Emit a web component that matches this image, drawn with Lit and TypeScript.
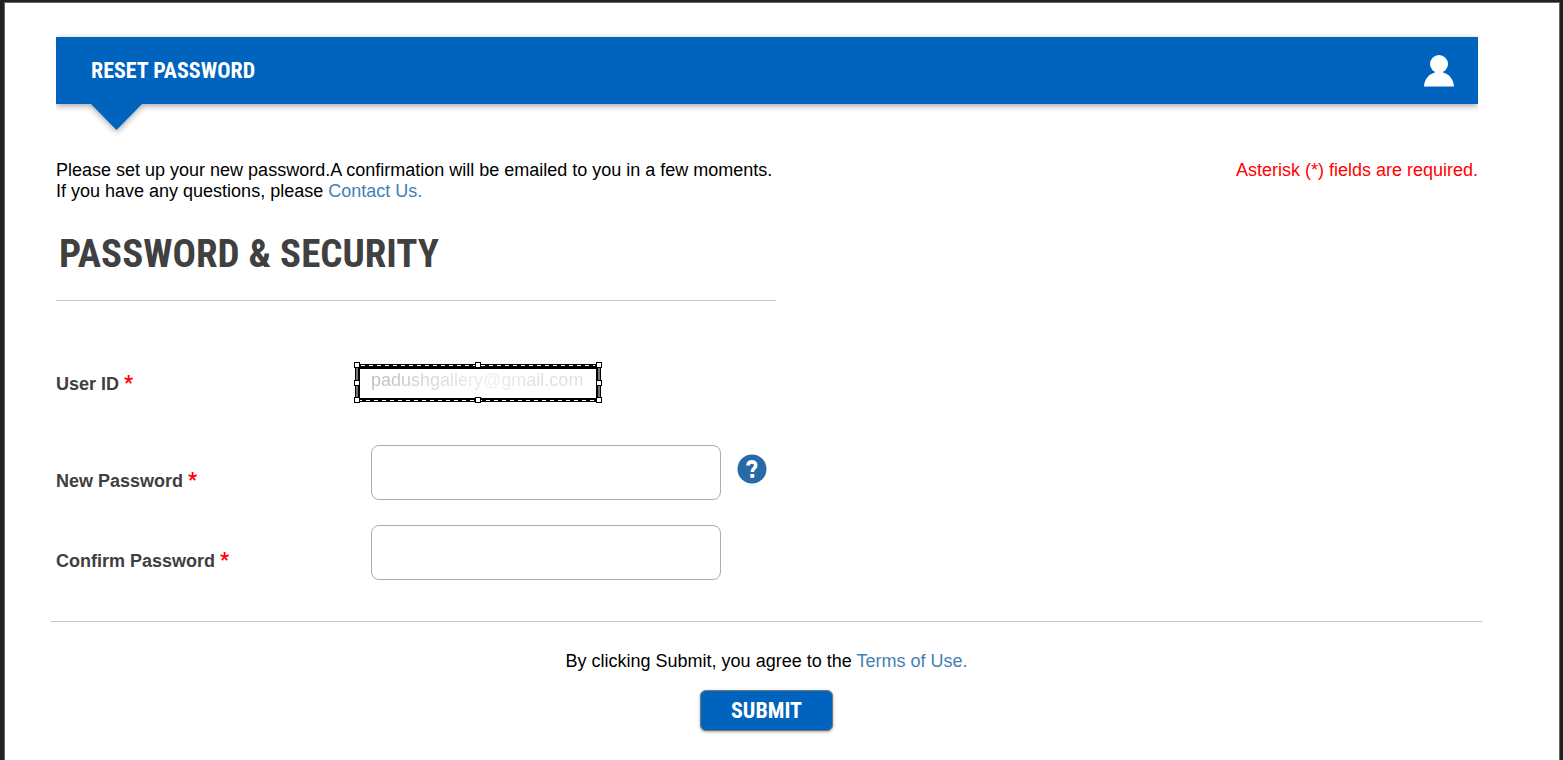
import { LitElement, html, svg, css } from "lit";
import { customElement } from "lit/decorators.js";

@customElement("selection-frame")
class SelectionFrame extends LitElement {
  static styles = css`
    :host {
      display: block;
    }
    svg {
      display: block;
    }
  `;

  render() {
    const handles = [
      [0, 0], [121, 0], [242, 0],
      [0, 18], [242, 18],
      [0, 35], [121, 35], [242, 35],
    ];
    return html`
      <svg width="248" height="41" viewBox="0 0 248 41" shape-rendering="crispEdges" aria-hidden="true">
        <path d="M1 2h246v38H1zM6 7v29h236V7z" fill="#000" fill-rule="evenodd" />
        <path d="M2 6h2v30H2zM244 6h2v30h-2z" fill="#777" />
        <path d="M7 3.500h234M4 38.500h238" stroke="#fff" stroke-width="1" stroke-dasharray="4 4" />
        ${handles.map(
          ([x, y]) => svg`
            <rect x=${x} y=${y} width="6" height="6" fill="#000" />
            <rect x=${x + 1} y=${y + 1} width="4" height="4" fill="#fff" />`
        )}
      </svg>
    `;
  }
}

@customElement("app-root")
class AppRoot extends LitElement {
  static styles = css`
    :host {
      display: block;
      font-family: "Liberation Sans", Arial, sans-serif;
      font-size: 18px;
      line-height: 21px;
      color: #000;
    }
    * {
      box-sizing: border-box;
    }
    .page {
      min-height: 100vh;
      padding: 1px 1px 0;
      background: #666;
      border: solid #222;
      border-width: 2px 3px 0 4px;
    }
    .sheet {
      min-height: calc(100vh - 3px);
      padding: 34px 81px 28px 51px;
      background: #fff;
    }
    .clip {
      clip-path: inset(-6px 0 -40px 0);
    }
    .banner {
      filter: drop-shadow(0 2px 3px rgba(0, 0, 0, 0.35));
    }
    .bar {
      position: relative;
      display: flex;
      align-items: center;
      justify-content: space-between;
      height: 67px;
      padding: 0 24px 0 35px;
      background: #0063be;
    }
    .bar::after {
      content: "";
      position: absolute;
      top: 100%;
      left: 35px;
      width: 51px;
      height: 26px;
      background: #0063be;
      clip-path: polygon(0 0, 100% 0, 50% 100%);
    }
    .title,
    .heading,
    .submit {
      font-family: "Roboto Condensed", "Liberation Sans Narrow", "Liberation Sans", sans-serif;
      font-weight: 700;
      text-transform: uppercase;
    }
    .title {
      margin: 0;
      font-size: 22px;
      line-height: 26px;
      color: #fff;
    }
    .user {
      width: 30px;
      height: 32px;
    }
    .intro {
      display: flex;
      justify-content: space-between;
      gap: 24px;
      margin-top: 56px;
    }
    p {
      margin: 0;
    }
    a {
      color: #427fb5;
      text-decoration: none;
    }
    .note {
      color: #f00;
    }
    .heading {
      max-width: 720px;
      margin: 28px 0 0;
      padding: 0 0 22px 3px;
      border-bottom: 1px solid #c6c6c6;
      font-size: 39px;
      line-height: 48px;
      color: #404040;
    }
    .fields {
      display: grid;
      gap: 25px;
      padding: 61px 0 41px;
    }
    .row {
      display: grid;
      grid-template-columns: 315px 350px auto;
      align-items: center;
      justify-content: start;
    }
    .row label {
      padding-top: 16px;
      font-weight: 700;
      color: #404040;
    }
    .row.first {
      align-items: start;
      height: 58px;
    }
    .row.first label {
      padding-top: 11px;
    }
    .star {
      font-family: "Roboto Condensed", "Liberation Sans", sans-serif;
      font-size: 20px;
      color: #f00;
    }
    .input {
      width: 100%;
      height: 55px;
      padding: 0 12px;
      border: 1px solid #adadad;
      border-radius: 8px;
      background: #fff;
      font: inherit;
      outline: none;
    }
    .value {
      position: relative;
    }
    .readonly {
      display: block;
      width: 100%;
      height: 36px;
      padding: 0;
      border: 0;
      background: linear-gradient(90deg, #bbb, #ddd 20%, #eee 35%, #ddd 50%, #eee);
      -webkit-background-clip: text;
      background-clip: text;
      color: transparent;
      font: inherit;
      outline: none;
    }
    .selection {
      position: absolute;
      top: 0;
      left: -17px;
    }
    .help {
      width: 30px;
      height: 30px;
      margin: 0 0 7px 16px;
      padding: 0;
      border: 0;
      border-radius: 50%;
      background: none;
    }
    .help svg {
      display: block;
    }
    .footer {
      display: flex;
      flex-direction: column;
      align-items: center;
      gap: 18px;
      margin: 0 -4px 0 -5px;
      padding-top: 29px;
      border-top: 1px solid #c6c6c6;
    }
    .submit {
      width: 133px;
      height: 41px;
      padding: 0;
      border: 1px solid #777;
      border-radius: 6px;
      background: #0063be;
      box-shadow: 0 1px 3px rgba(0, 0, 0, 0.35);
      font-size: 22px;
      line-height: 26px;
      color: #fff;
    }
  `;

  render() {
    return html`
      <div class="page">
        <main class="sheet">
          <header class="clip">
            <div class="banner">
              <div class="bar">
                <h1 class="title">Reset Password</h1>
                <svg class="user" viewBox="0 0 30 32" fill="#fff" aria-hidden="true">
                  <circle cx="15" cy="9" r="9" />
                  <path d="M11 15h8v2.500C25 19 29.500 24 30 31.500H0C.5 24 5 19 11 17.500z" />
                </svg>
              </div>
            </div>
          </header>

          <div class="intro">
            <p>
              Please set up your new password.A confirmation will be emailed to you in a few moments.<br />
              If you have any questions, please <a href="#contact">Contact Us.</a>
            </p>
            <p class="note">Asterisk (*) fields are required.</p>
          </div>

          <form @submit=${(e: Event) => e.preventDefault()}>
            <h2 class="heading">Password &amp; Security</h2>
            <div class="fields">
              <div class="row first">
                <label for="user">User ID <span class="star">*</span></label>
                <div class="value">
                  <input class="readonly" id="user" type="text" readonly value="padushgallery@gmail.com" />
                  <selection-frame class="selection"></selection-frame>
                </div>
              </div>
              <div class="row">
                <label for="new">New Password <span class="star">*</span></label>
                <input class="input" id="new" type="password" />
                <button class="help" type="button" aria-label="Password help">
                  <svg width="30" height="30" viewBox="0 0 30 30" aria-hidden="true">
                    <circle cx="15" cy="15" r="14.500" fill="#2869a8" />
                    <path d="M11 11.500C11 6.500 18.800 6.800 18.800 11.200C18.800 14.500 15.300 14 15.300 18" fill="none" stroke="#fff" stroke-width="3.600" />
                    <rect x="13.300" y="20" width="4" height="3.800" fill="#fff" />
                  </svg>
                </button>
              </div>
              <div class="row">
                <label for="confirm">Confirm Password <span class="star">*</span></label>
                <input class="input" id="confirm" type="password" />
              </div>
            </div>
            <div class="footer">
              <p>By clicking Submit, you agree to the <a href="#terms">Terms of Use.</a></p>
              <button class="submit" type="submit">Submit</button>
            </div>
          </form>
        </main>
      </div>
    `;
  }
}
